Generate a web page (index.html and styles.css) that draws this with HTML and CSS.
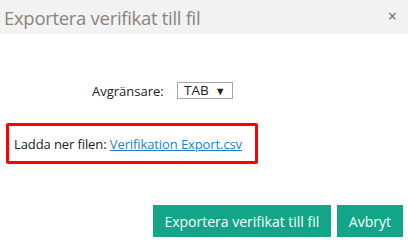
FILE: index.html
```html
<!DOCTYPE html>
<html lang="sv">
<head>
<meta charset="utf-8">
<title>Exportera verifikat till fil</title>
<link rel="stylesheet" href="styles.css">
</head>
<body>
<div class="dialog">
  <div class="header">
    <span class="title">Exportera verifikat till fil</span>
    <span class="close">&times;</span>
  </div>
  <div class="row">
    <span class="label">Avgränsare:</span>
    <span class="select">TAB <span class="arrow">&#9660;</span></span>
  </div>
  <div class="download">
    <span>Ladda ner filen:&nbsp;</span><a class="link" href="#">Verifikation Export.csv</a>
  </div>
  <div class="footer">
    <button class="btn btn-wide">Exportera verifikat till fil</button>
    <button class="btn">Avbryt</button>
  </div>
</div>
</body>
</html>
```
FILE: styles.css
```css
* { box-sizing: border-box; }
html, body { margin: 0; padding: 0; background: #fff; }
body { font-family: "Open Sans", "Noto Sans", sans-serif; color: #222; }
.dialog { width: 408px; height: 243px; }
.header {
  height: 34px;
  background: #f2f2f2;
  display: flex;
  align-items: center;
  justify-content: space-between;
  padding: 0 11px 0 4px;
}
.title { font-size: 18.5px; color: #8a837e; letter-spacing: -0.3px; }
.close { font-size: 16px; line-height: 1; color: #6f6762; align-self: flex-start; margin-top: 8px; }
.row {
  margin-top: 48px;
  display: flex;
  align-items: center;
  padding-left: 92px;
  height: 17px;
  font-size: 13px;
}
.label { width: 85px; color: #222; }
.select {
  width: 56px;
  height: 17px;
  border: 1px solid #a6a6a6;
  display: flex;
  align-items: center;
  padding-left: 6px;
  font-size: 13.5px;
  line-height: 1;
}
.arrow { font-size: 11px; margin-left: 6px; }
.download {
  margin-top: 24px;
  margin-left: 6px;
  width: 252px;
  height: 41px;
  border: 3px solid #f00;
  border-radius: 2px;
  display: flex;
  align-items: center;
  padding-left: 5px;
  font-size: 13px;
  letter-spacing: -0.1px;
  white-space: nowrap;
}
.link { color: #1a7fd0; text-decoration: underline; }
.footer {
  margin-top: 41px;
  display: flex;
  justify-content: flex-end;
  gap: 6px;
  padding-right: 5px;
}
.btn {
  height: 32px;
  background: #12a588;
  color: #fff;
  border: 0;
  font-family: "Open Sans", "Noto Sans", sans-serif;
  font-size: 14px;
  padding: 0 12px;
}
.btn-wide { width: 178px; padding: 0; }
```
